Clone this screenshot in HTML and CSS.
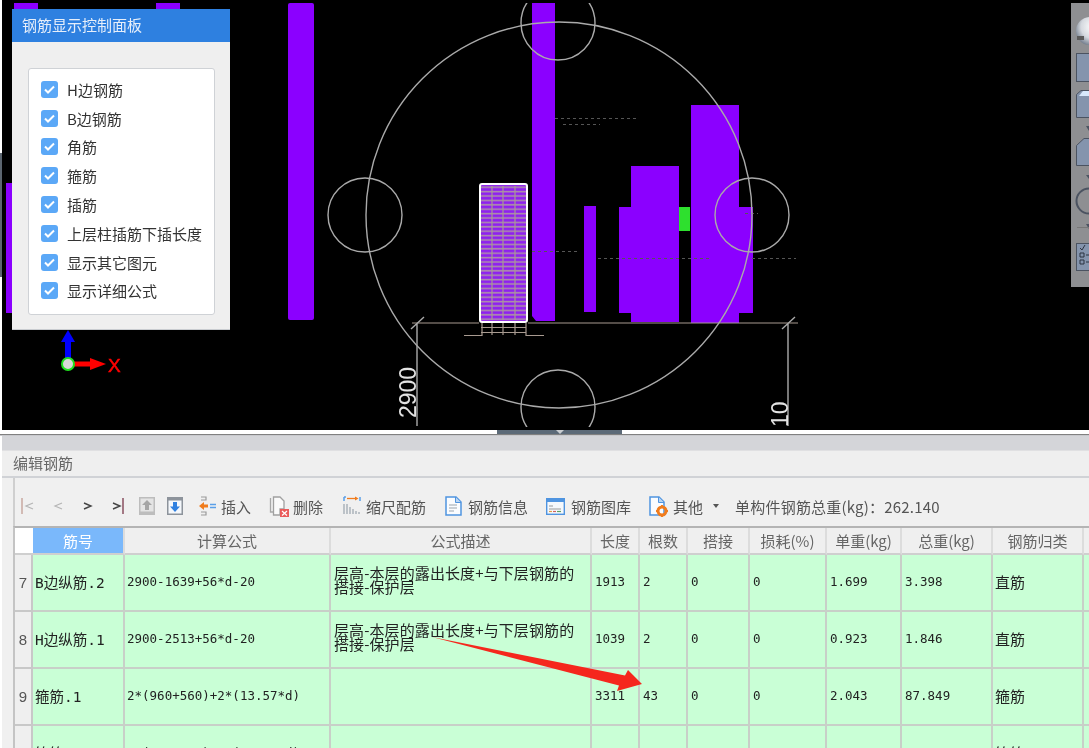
FILE: index.html
```html
<!DOCTYPE html>
<html lang="zh">
<head>
<meta charset="utf-8">
<title>编辑钢筋</title>
<link rel="stylesheet" href="styles.css">
</head>
<body>
<div class="page">
  <section class="scene">
    <svg class="drawing" width="1089" height="430" viewBox="0 0 1089 430">
      <defs>
        <pattern id="hatch" width="10" height="4.4" patternUnits="userSpaceOnUse">
          <rect width="10" height="4.4" fill="#8f20f0"/>
          <rect y="1.6" width="10" height="1.6" fill="#ad8fa8"/>
        </pattern>
        <radialGradient id="ball" cx="0.6" cy="0.35" r="0.7">
          <stop offset="0" stop-color="#ffffff"/>
          <stop offset="0.6" stop-color="#d5d9df"/>
          <stop offset="1" stop-color="#6f7a8a"/>
        </radialGradient>
        <clipPath id="view"><rect x="2" y="3" width="1087" height="424"/></clipPath>
      </defs>
      <rect x="2" y="0" width="1087" height="430" fill="#000"/>
      <rect x="0" y="153" width="2" height="124" fill="#5c6670"/>
      <g class="purple">
        <rect x="6" y="183" width="6" height="130"/>
        <rect x="14" y="3" width="24" height="7"/>
        <rect x="156" y="3" width="24" height="7"/>
        <rect x="288" y="3" width="26" height="317" rx="2"/>
        <path d="M532 3H555V321H536L532 316Z"/>
        <rect x="584" y="206" width="12" height="106"/>
        <rect x="619" y="207" width="12" height="106"/>
        <rect x="631" y="166" width="48" height="156"/>
        <rect x="691" y="105" width="48" height="218"/>
        <rect x="739" y="207" width="14" height="106"/>
      </g>
      <rect x="679" y="207" width="11" height="24" fill="#2ee02e"/>
      <g class="dots">
        <path d="M555 118.500H636"/>
        <path d="M563 124.500H600"/>
        <path d="M532 251.500H580"/>
        <path d="M598 258.500H712"/>
        <path d="M752 258.500H796"/>
        <path d="M745 213.500H758"/>
      </g>
      <g class="ground">
        <path d="M412 323H479M528 323H798"/>
        <path d="M464 335.500H482V323M544 335.500H526V323"/>
        <path d="M492 323V335M503 323V335M515 323V335"/>
        <path d="M481 327.500H526M481 332.500H526"/>
      </g>
      <rect x="480" y="184" width="47" height="138" rx="2" fill="url(#hatch)" stroke="#fff" stroke-width="2"/>
      <path class="ground" d="M492 186V320M503 186V320M515 186V320"/>
      <g class="lines" clip-path="url(#view)">
        <circle cx="559" cy="215" r="193"/>
        <circle cx="558" cy="23" r="37"/>
        <circle cx="365" cy="215" r="37"/>
        <circle cx="752" cy="215" r="37"/>
        <circle cx="558" cy="407" r="37"/>
        <path d="M417 323V426M411 329L424 317M788 323V426M782 329L795 317"/>
      </g>
      <text class="dim" transform="translate(416 418) rotate(-90)">2900</text>
      <text class="dim" transform="translate(788 427) rotate(-90)">10</text>
      <g class="axis">
        <path d="M68 336V360" stroke="#0000ff" stroke-width="6"/>
        <path d="M68 330L75 342H61Z" fill="#0000ff"/>
        <path d="M72 364H92" stroke="#ff0000" stroke-width="5"/>
        <path d="M106 364L90 358V370Z" fill="#ff0000"/>
        <circle cx="68" cy="364" r="6" fill="#d8d8d8" stroke="#1fe01f" stroke-width="2"/>
        <text class="axis-label" x="108" y="372">X</text>
      </g>
      <g class="side">
        <rect x="1071" y="3" width="18" height="284" fill="#8e8f92"/>
        <circle cx="1090" cy="31" r="14" fill="url(#ball)"/>
        <path d="M1077 36H1084V40H1077Z" fill="#5a5a5a"/>
        <rect class="face" x="1076.500" y="53.500" width="20" height="28"/>
        <path class="face" d="M1076.500 94.500L1081 90.500H1096V117.500H1076.500Z"/>
        <path d="M1083 91H1096V96H1079Z" fill="#d7e8fb"/>
        <path class="face" d="M1076.500 145.500L1084 138.500H1096V165.500H1076.500Z"/>
        <path d="M1086 175H1089V179Z" fill="#4b5361"/>
        <circle cx="1089" cy="201" r="12.500" fill="none" stroke="#4b5361" stroke-width="2"/>
        <path d="M1086 126H1089V131Z" fill="#4b5361"/>
        <path d="M1086 224H1089V229Z" fill="#4b5361"/>
        <path d="M1077 227.500H1089" stroke="#777" stroke-width="1"/>
        <rect class="face" x="1076.500" y="243.500" width="20" height="27"/>
        <path d="M1080 248L1082 250L1085 245M1080 253H1084V257H1080ZM1080 260H1084V264H1080ZM1086 255H1089M1086 262H1089" fill="none" stroke="#2b3340" stroke-width="1"/>
      </g>
    </svg>

    <aside class="panel">
      <h2 class="panel-title">钢筋显示控制面板</h2>
      <div class="panel-body">
        <ul class="check-list">
          <li class="check-item"><span class="check"><svg width="11" height="9" viewBox="0 0 11 9"><path d="M1 4.500L4 7.500L10 1.500"/></svg></span>H边钢筋</li>
          <li class="check-item"><span class="check"><svg width="11" height="9" viewBox="0 0 11 9"><path d="M1 4.500L4 7.500L10 1.500"/></svg></span>B边钢筋</li>
          <li class="check-item"><span class="check"><svg width="11" height="9" viewBox="0 0 11 9"><path d="M1 4.500L4 7.500L10 1.500"/></svg></span>角筋</li>
          <li class="check-item"><span class="check"><svg width="11" height="9" viewBox="0 0 11 9"><path d="M1 4.500L4 7.500L10 1.500"/></svg></span>箍筋</li>
          <li class="check-item"><span class="check"><svg width="11" height="9" viewBox="0 0 11 9"><path d="M1 4.500L4 7.500L10 1.500"/></svg></span>插筋</li>
          <li class="check-item"><span class="check"><svg width="11" height="9" viewBox="0 0 11 9"><path d="M1 4.500L4 7.500L10 1.500"/></svg></span>上层柱插筋下插长度</li>
          <li class="check-item"><span class="check"><svg width="11" height="9" viewBox="0 0 11 9"><path d="M1 4.500L4 7.500L10 1.500"/></svg></span>显示其它图元</li>
          <li class="check-item"><span class="check"><svg width="11" height="9" viewBox="0 0 11 9"><path d="M1 4.500L4 7.500L10 1.500"/></svg></span>显示详细公式</li>
        </ul>
      </div>
    </aside>
    <div class="handle"><span class="handle-arrow"></span></div>
  </section>

  <section class="editor">
    <div class="gap-bar"></div>
    <h3 class="editor-title">编辑钢筋</h3>
    <div class="content">
      <div class="toolbar">
        <svg class="nav" width="103" height="20" viewBox="0 0 103 20">
          <path d="M1 2V18" stroke="#c9a9a0" stroke-width="1.500" fill="none"/>
          <path d="M12 7L5 10L12 13" stroke="#b5b5b5" stroke-width="1.200" fill="none"/>
          <path d="M41 7L34 10L41 13" stroke="#b5b5b5" stroke-width="1.200" fill="none"/>
          <path d="M63 7L70 10L63 13" stroke="#444" stroke-width="1.400" fill="none"/>
          <path d="M92 7L99 10L92 13" stroke="#444" stroke-width="1.400" fill="none"/>
          <path d="M102 2V18" stroke="#8a5060" stroke-width="1.500" fill="none"/>
        </svg>
        <svg class="move" width="16" height="18" viewBox="0 0 16 18">
          <rect width="16" height="18" fill="#bdbdbd"/>
          <rect x="1.500" y="1.500" width="13" height="13" fill="#e4e4e4"/>
          <path d="M8 3L13 8H10V13H6V8H3Z" fill="#a5a5a5"/>
        </svg>
        <svg class="move" width="16" height="18" viewBox="0 0 16 18">
          <rect width="16" height="18" fill="#8d939b"/>
          <rect x="1.500" y="3.500" width="13" height="13" fill="#f4f7fb"/>
          <path d="M8 15L13 9.500H10V5H6V9.500H3Z" fill="#2f80e0"/>
        </svg>
        <div class="tool tool-insert">
          <svg width="18" height="20" viewBox="0 0 18 20">
            <path d="M3 1H8V4H3M3 16H8V19H3" fill="none" stroke="#9a9a9a" stroke-width="1.200"/>
            <path d="M1 10L6 6V8.500H10V11.500H6V14Z" fill="#f07c1d"/>
            <path d="M12 8.500H18M12 11.500H18" stroke="#5a9fe8" stroke-width="1.500"/>
          </svg>
          <span>插入</span>
        </div>
        <div class="tool tool-delete">
          <svg width="20" height="21" viewBox="0 0 20 21">
            <path d="M1.500 2V16H5" fill="none" stroke="#a8a8a8" stroke-width="1.300"/>
            <path d="M4.500 1H11L15 5V13H11V19H4.500Z" fill="#fafafa" stroke="#a0a0a0" stroke-width="1.300"/>
            <rect x="11" y="13" width="9" height="8" fill="#ea5a5a"/>
            <path d="M13 15L18 19.500M18 15L13 19.500" stroke="#fff" stroke-width="1.200"/>
          </svg>
          <span>删除</span>
        </div>
        <div class="tool tool-scale">
          <svg width="18" height="20" viewBox="0 0 18 20">
            <path d="M1 1V5M1 1H3" stroke="#5a9fe8" stroke-width="1.500" fill="none"/>
            <path d="M4 2.500H14" stroke="#f07c1d" stroke-width="1.300"/>
            <path d="M12 0.500L15.500 2.500L12 4.500Z" fill="#f07c1d"/>
            <path d="M17 1V5" stroke="#5a9fe8" stroke-width="1.500"/>
            <path d="M1 8V18M4 8V18M7 11V18M10 13V18M13 15V18M16 16V18" stroke="#9aa4ad" stroke-width="1.200"/>
          </svg>
          <span>缩尺配筋</span>
        </div>
        <div class="tool tool-info">
          <svg width="17" height="20" viewBox="0 0 17 20">
            <path d="M1 1H11L16 6V19H1Z" fill="#fafcff" stroke="#4f94e0" stroke-width="1.500"/>
            <path d="M10.500 1V6.500H16" fill="#b9d5f4" stroke="#4f94e0" stroke-width="1"/>
            <path d="M4 9H12M4 12H12M4 15H9" stroke="#9aa4ad" stroke-width="1.100"/>
          </svg>
          <span>钢筋信息</span>
        </div>
        <div class="tool tool-library">
          <svg width="19" height="17" viewBox="0 0 19 17">
            <rect x="0.700" y="0.700" width="17.600" height="15.600" fill="#f5f8fc" stroke="#4f94e0" stroke-width="1.400"/>
            <rect x="1" y="1" width="17" height="3" fill="#4f94e0"/>
            <path d="M3 8H7M3 11H15" stroke="#9a9a9a" stroke-width="1.200"/>
            <path d="M3 13.500H6" stroke="#e0a040" stroke-width="1.200"/>
            <path d="M7 13.500H10" stroke="#d06060" stroke-width="1.200"/>
            <path d="M11 13.500H15" stroke="#60a060" stroke-width="1.200"/>
          </svg>
          <span>钢筋图库</span>
        </div>
        <div class="tool tool-other">
          <svg width="19" height="21" viewBox="0 0 19 21">
            <path d="M1 1H10L15 6V19H1Z" fill="#fafcff" stroke="#4f94e0" stroke-width="1.500"/>
            <path d="M9.500 1V6.500H15" fill="#b9d5f4" stroke="#4f94e0" stroke-width="1"/>
            <circle cx="13" cy="15" r="4" fill="none" stroke="#f07c1d" stroke-width="3"/>
            <path d="M13 9V11M13 19V21M7 15H9M17 15H19" stroke="#f07c1d" stroke-width="2"/>
          </svg>
          <span>其他</span>
          <span class="caret"></span>
        </div>
        <span class="total">单构件钢筋总重(kg)：262.140</span>
      </div>

      <table class="rebar-table">
        <colgroup>
          <col class="c-row"><col class="c-name"><col class="c-formula"><col class="c-desc">
          <col class="c-len"><col class="c-count"><col class="c-lap"><col class="c-loss">
          <col class="c-unit"><col class="c-sum"><col class="c-type"><col class="c-end">
        </colgroup>
        <thead>
          <tr>
            <th class="corner"></th>
            <th class="active">筋号</th>
            <th>计算公式</th>
            <th>公式描述</th>
            <th>长度</th>
            <th>根数</th>
            <th>搭接</th>
            <th>损耗(%)</th>
            <th>单重(kg)</th>
            <th>总重(kg)</th>
            <th>钢筋归类</th>
            <th class="end"></th>
          </tr>
        </thead>
        <tbody>
          <tr>
            <th class="row-no">7</th>
            <td class="name">B边纵筋.2</td>
            <td class="formula">2900-1639+56*d-20</td>
            <td class="desc">层高-本层的露出长度+与下层钢筋的<br>搭接-保护层</td>
            <td>1913</td><td>2</td><td>0</td><td>0</td>
            <td>1.699</td><td>3.398</td>
            <td class="type">直筋</td><td class="end"></td>
          </tr>
          <tr>
            <th class="row-no">8</th>
            <td class="name">H边纵筋.1</td>
            <td class="formula">2900-2513+56*d-20</td>
            <td class="desc">层高-本层的露出长度+与下层钢筋的<br>搭接-保护层</td>
            <td>1039</td><td>2</td><td>0</td><td>0</td>
            <td>0.923</td><td>1.846</td>
            <td class="type">直筋</td><td class="end"></td>
          </tr>
          <tr>
            <th class="row-no">9</th>
            <td class="name">箍筋.1</td>
            <td class="formula">2*(960+560)+2*(13.57*d)</td>
            <td class="desc"></td>
            <td>3311</td><td>43</td><td>0</td><td>0</td>
            <td>2.043</td><td>87.849</td>
            <td class="type">箍筋</td><td class="end"></td>
          </tr>
          <tr>
            <th class="row-no">10</th>
            <td class="name">箍筋.2</td>
            <td class="formula">2*(960+560)+2*(13.57*d)</td>
            <td class="desc"></td>
            <td>3311</td><td>43</td><td>0</td><td>0</td>
            <td>2.043</td><td>87.849</td>
            <td class="type">箍筋</td><td class="end"></td>
          </tr>
        </tbody>
      </table>
    </div>
    <svg class="callout" width="214" height="58" viewBox="0 0 214 58">
      <path d="M0 0L193 38.500L196 33L210 47L185 54L187 48.500Z" fill="#f5271d"/>
    </svg>
  </section>
</div>
</body>
</html>
```

FILE: styles.css
```css
* { box-sizing: border-box; }

html, body { margin: 0; padding: 0; }

body {
  background: #fff;
  font-family: "Noto Sans CJK SC", "Noto Sans", sans-serif;
  overflow: hidden;
}

.page { width: 1089px; height: 748px; overflow: hidden; filter: blur(0.35px); }

/* Drawing canvas */
.scene { position: relative; width: 1089px; height: 436px; background: #fff; }
.drawing { display: block; }
.purple { fill: #8b00ff; }
.lines { fill: none; stroke: #aaa; stroke-width: 1.4; }
.ground { fill: none; stroke: #a89a90; stroke-width: 1.2; }
.dots { fill: none; stroke: #555; stroke-width: 1; stroke-dasharray: 3 3; }
.dim { font-family: "Liberation Sans", sans-serif; font-size: 23px; fill: #e2e2e2; }
.axis-label { font-family: "Liberation Sans", sans-serif; font-size: 19px; fill: #ff0000; stroke: #ff0000; stroke-width: 0.5; }
.face { fill: #8494ad; stroke: #4b5361; stroke-width: 1; }

.handle {
  position: absolute;
  left: 497px;
  top: 430px;
  width: 125px;
  height: 6px;
  background: #5c6a78;
  display: flex;
  justify-content: center;
}
.handle-arrow {
  width: 0;
  height: 0;
  border-left: 4px solid transparent;
  border-right: 4px solid transparent;
  border-top: 4px solid #c8ccd0;
}
.scene::after {
  content: "";
  position: absolute;
  left: 0;
  right: 0;
  top: 434px;
  height: 2px;
  background: linear-gradient(#808080 50%, #c8c9cd 50%);
}

/* Control panel */
.panel {
  position: absolute;
  left: 12px;
  top: 9px;
  width: 218px;
  height: 321px;
  background: #efefef;
  border-bottom: 1px solid #c9ccd0;
}
.panel-title {
  margin: 0;
  height: 33px;
  padding-left: 10px;
  background: #2e80e0;
  color: #e6eefa;
  font-size: 15px;
  font-weight: 400;
  line-height: 32px;
}
.panel-body { padding: 26px 15px 0 16px; }
.check-list {
  list-style: none;
  margin: 0;
  height: 247px;
  padding: 6px 0 0 12px;
  background: #fff;
  border: 1px solid #cfd2d6;
  border-radius: 3px;
  display: grid;
  grid-auto-rows: 28.8px;
  align-content: start;
}
.check-item {
  display: flex;
  align-items: center;
  gap: 9px;
  font-size: 15px;
  color: #333;
  white-space: nowrap;
}
.check {
  width: 17px;
  height: 17px;
  background: #5ba8f7;
  border-radius: 3px;
  display: flex;
  align-items: center;
  justify-content: center;
  flex: none;
}
.check path { fill: none; stroke: #fff; stroke-width: 2; }

/* Editor */
.editor { position: relative; height: 312px; padding-left: 2px; background: #fff; }
.gap-bar { height: 14px; background: #d4d5d9; }
.editor-title {
  margin: 0;
  height: 28px;
  padding-left: 11px;
  background: #efefef;
  border-top: 1px solid #e0e0e2;
  border-bottom: 2px solid #d0d2d6;
  color: #666;
  font-size: 15px;
  font-weight: 400;
  line-height: 24px;
}
.content { height: 270px; padding-left: 11px; background: #f0f0f0; }

.toolbar {
  height: 48px;
  padding: 8px 0 0 6px;
  display: flex;
  align-items: center;
  gap: 18px;
  position: relative;
  border-left: 2px solid #cfcfcf;
  color: #555;
  font-size: 15px;
}
.nav { margin-right: -3px; }
.move { margin-right: -6px; }
.move + .tool { margin-left: 3px; }
.tool { display: flex; align-items: center; gap: 5px; white-space: nowrap; }
.tool svg { flex: none; }
.tool-delete { gap: 4px; }
.tool-scale { margin-left: 2px; }
.tool-info { margin-left: 1px; gap: 6px; }
.tool-library { gap: 6px; }
.caret {
  width: 0;
  height: 0;
  margin-left: 5px;
  border-left: 3.5px solid transparent;
  border-right: 3.5px solid transparent;
  border-top: 4px solid #555;
}
.total { margin-left: -2px; white-space: nowrap; letter-spacing: 0.2px; }

.rebar-table {
  width: 1077px;
  table-layout: fixed;
  border-collapse: separate;
  border-spacing: 0;
  border-top: 2px solid #b4b4b4;
  border-left: 2px solid #c4c4c4;
}
.c-row { width: 18px; }
.c-name { width: 92px; }
.c-formula { width: 206px; }
.c-desc { width: 261px; }
.c-len { width: 48px; }
.c-count { width: 48px; }
.c-lap { width: 62px; }
.c-loss { width: 77px; }
.c-unit { width: 75px; }
.c-sum { width: 91px; }
.c-type { width: 91px; }
.c-end { width: 6px; }

.rebar-table thead th {
  height: 27px;
  padding: 0;
  background: #efefef;
  color: #666;
  font-size: 15px;
  font-weight: 400;
  border-right: 2px solid #dcdcdc;
  border-bottom: 2px solid #cfcfcf;
  white-space: nowrap;
  overflow: hidden;
}
.rebar-table thead .corner { background: #fff; border-right: 0; }
.rebar-table thead .active { background: #7ab8fb; color: #fff; }
.rebar-table thead .end { border-right: 0; }

.rebar-table tbody tr { height: 57px; }
.rebar-table td {
  padding: 0 0 2px 3px;
  background: #c9ffd6;
  border-right: 2px solid #c8cfc8;
  border-bottom: 2px solid #c8cfc8;
  color: #222;
  font-family: "DejaVu Sans Mono", "Noto Sans CJK SC", monospace;
  font-size: 12.5px;
  white-space: nowrap;
  overflow: hidden;
}
.rebar-table td.name { padding-left: 2px; font-size: 14.5px; }
.rebar-table td.formula { padding-left: 2px; }
.rebar-table td.type {
  font-family: "Noto Sans CJK SC", sans-serif;
  font-size: 15px;
  padding-left: 2px;
}
.rebar-table td.desc {
  font-family: "Noto Sans CJK SC", sans-serif;
  font-size: 15px;
  letter-spacing: 0.1px;
  line-height: 14px;
  padding-bottom: 5px;
}
.rebar-table td.end { border-right: 0; }
.row-no {
  padding: 0;
  background: #efefef;
  border-right: 2px solid #c8c8c8;
  border-bottom: 2px solid #c8c8c8;
  color: #555;
  font-family: "Liberation Sans", sans-serif;
  font-size: 15px;
  font-weight: 400;
  overflow: hidden;
}

.callout { position: absolute; left: 432px; top: 201px; pointer-events: none; }
```
